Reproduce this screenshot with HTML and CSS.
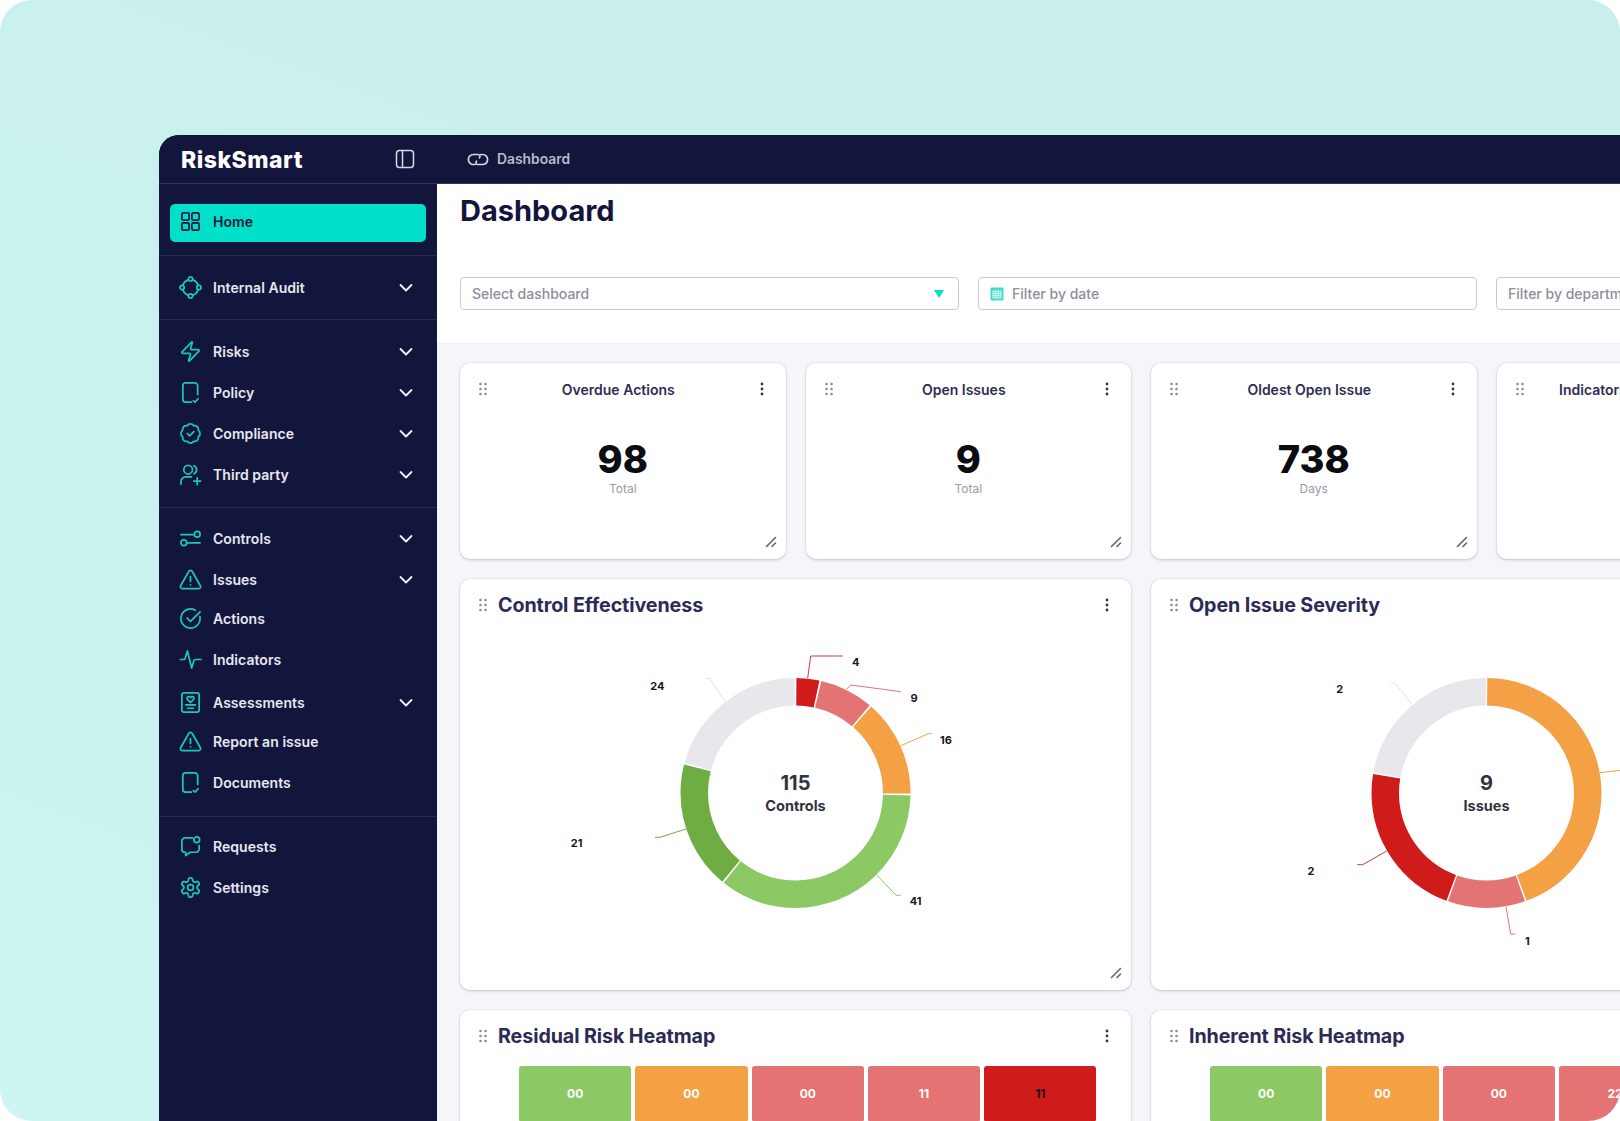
FILE: index.html
```html
<!DOCTYPE html>
<html lang="en">
<head>
<meta charset="utf-8">
<title>RiskSmart Dashboard</title>
<link rel="stylesheet" href="styles.css">
</head>
<body>
<svg class="sprite" width="0" height="0" aria-hidden="true">
  <symbol id="i-doc" viewBox="0 0 24 24"><path d="M19.500 14V5a3 3 0 0 0-3-3H7a3 3 0 0 0-3 3v14a3 3 0 0 0 3 3h6"/><path d="M15 20.500l1.800 1.500 3.200-3.500"/></symbol>
  <symbol id="i-tri" viewBox="0 0 24 24"><path d="M22.300 18.500 13.800 3.600a2 2 0 0 0-3.600 0L1.700 18.500A2 2 0 0 0 3.500 21.500h17a2 2 0 0 0 1.800-3z"/><path d="M12 9v5"/><path d="M12 17.500h.01"/></symbol>
  <symbol id="i-chev" viewBox="0 0 16 16"><path d="M2.500 5 8 10.500 13.500 5"/></symbol>
  <symbol id="i-grip" viewBox="0 0 8 14"><circle cx="1.500" cy="2" r="1.300"/><circle cx="6.500" cy="2" r="1.300"/><circle cx="1.500" cy="7" r="1.300"/><circle cx="6.500" cy="7" r="1.300"/><circle cx="1.500" cy="12" r="1.300"/><circle cx="6.500" cy="12" r="1.300"/></symbol>
  <symbol id="i-dots" viewBox="0 0 4 14"><circle cx="2" cy="2" r="1.400"/><circle cx="2" cy="7" r="1.400"/><circle cx="2" cy="12" r="1.400"/></symbol>
  <symbol id="i-resize" viewBox="0 0 12 12"><path d="M1.500 10.500 10.500 1.500"/><path d="M7 10.500 10.500 7"/></symbol>
</svg>

<div class="frame">
  <div class="app">
    <header class="topbar">
      <div class="brand">
        <span class="logo">RiskSmart</span>
        <svg class="panel-icon" viewBox="0 0 20 20"><rect x="1.500" y="1.500" width="17" height="17" rx="3"/><path d="M7.500 1.500v17"/></svg>
      </div>
      <div class="crumb">
        <svg class="crumb-icon" viewBox="0 0 24 16"><path d="M9 13.500H7a5.500 5.500 0 0 1 0-11h5c2.200 0 2.800 2 1.600 3.700"/><path d="M15 2.500h2a5.500 5.500 0 0 1 0 11h-5c-2.200 0-2.800-2-1.600-3.700"/></svg>
        <span>Dashboard</span>
      </div>
    </header>

    <div class="body">
      <nav class="sidebar">
        <div class="nav-section nav-section--home">
          <a class="nav-item nav-item--active">
            <svg class="nav-icon" viewBox="0 0 24 24"><rect x="3" y="3" width="7.500" height="7.500" rx="1.500"/><rect x="13.500" y="3" width="7.500" height="7.500" rx="1.500"/><rect x="3" y="13.500" width="7.500" height="7.500" rx="1.500"/><rect x="13.500" y="13.500" width="7.500" height="7.500" rx="1.500"/></svg>
            <span class="nav-label">Home</span>
          </a>
        </div>
        <div class="nav-section">
          <a class="nav-item">
            <svg class="nav-icon" viewBox="0 0 24 24"><path d="M14.600 4.100a8.800 8.800 0 0 1 5.300 5.300M19.900 14.600a8.800 8.800 0 0 1-5.300 5.300M9.400 19.900a8.800 8.800 0 0 1-5.300-5.300M4.100 9.400a8.800 8.800 0 0 1 5.300-5.300"/><circle cx="12" cy="3.200" r="2.200"/><circle cx="20.800" cy="12" r="2.200"/><circle cx="12" cy="20.800" r="2.200"/><circle cx="3.200" cy="12" r="2.200"/></svg>
            <span class="nav-label">Internal Audit</span>
            <svg class="chev"><use href="#i-chev"/></svg>
          </a>
        </div>
        <div class="nav-section nav-section--risk">
          <a class="nav-item">
            <svg class="nav-icon" viewBox="0 0 24 24"><path d="M4 14a1 1 0 0 1-.78-1.630l9.900-10.200a.5.5 0 0 1 .86.460l-1.920 6.020A1 1 0 0 0 13 10h7a1 1 0 0 1 .78 1.630l-9.900 10.200a.5.5 0 0 1-.86-.460l1.920-6.020A1 1 0 0 0 11 14z"/></svg>
            <span class="nav-label">Risks</span>
            <svg class="chev"><use href="#i-chev"/></svg>
          </a>
          <a class="nav-item">
            <svg class="nav-icon"><use href="#i-doc"/></svg>
            <span class="nav-label">Policy</span>
            <svg class="chev"><use href="#i-chev"/></svg>
          </a>
          <a class="nav-item">
            <svg class="nav-icon" viewBox="0 0 24 24"><path d="M3.850 8.620a4 4 0 0 1 4.780-4.770 4 4 0 0 1 6.740 0 4 4 0 0 1 4.780 4.780 4 4 0 0 1 0 6.740 4 4 0 0 1-4.770 4.780 4 4 0 0 1-6.750 0 4 4 0 0 1-4.780-4.770 4 4 0 0 1 0-6.760z"/><path d="m8.500 12 2.500 2.500 4.500-4.500"/></svg>
            <span class="nav-label">Compliance</span>
            <svg class="chev"><use href="#i-chev"/></svg>
          </a>
          <a class="nav-item">
            <svg class="nav-icon" viewBox="0 0 24 24"><circle cx="9.500" cy="7" r="4.500"/><path d="M15.500 2.800a4.500 4.500 0 0 1 0 8.400"/><path d="M2 22v-2.500A5 5 0 0 1 7 14.500h6"/><path d="M19 15.500v7M15.500 19h7"/></svg>
            <span class="nav-label">Third party</span>
            <svg class="chev"><use href="#i-chev"/></svg>
          </a>
        </div>
        <div class="nav-section nav-section--core">
          <a class="nav-item">
            <svg class="nav-icon" viewBox="0 0 24 24"><path d="M2 8h14"/><circle cx="19" cy="7.500" r="3"/><path d="M8 16.500h14"/><circle cx="5" cy="16.500" r="3"/></svg>
            <span class="nav-label">Controls</span>
            <svg class="chev"><use href="#i-chev"/></svg>
          </a>
          <a class="nav-item">
            <svg class="nav-icon"><use href="#i-tri"/></svg>
            <span class="nav-label">Issues</span>
            <svg class="chev"><use href="#i-chev"/></svg>
          </a>
          <a class="nav-item nav-item--up">
            <svg class="nav-icon" viewBox="0 0 24 24"><path d="M21.800 10A10 10 0 1 1 17 3.340"/><path d="m8.500 11.500 3.500 3.500L22 5"/></svg>
            <span class="nav-label">Actions</span>
          </a>
          <a class="nav-item">
            <svg class="nav-icon" viewBox="0 0 24 24"><path d="M1.500 12h3.500a1.500 1.500 0 0 0 1.400-1L8.800 3l4.400 18 2.300-7.800a1.500 1.500 0 0 1 1.400-1.200h6"/></svg>
            <span class="nav-label">Indicators</span>
          </a>
          <a class="nav-item nav-item--down">
            <svg class="nav-icon" viewBox="0 0 24 24"><rect x="3" y="2" width="18" height="20" rx="2"/><path d="M12 12 8.800 8.800a1.900 1.900 0 0 1 0-2.400c.8-.7 2.200-.7 3.200.4 1-1.100 2.400-1.100 3.200-.4a1.900 1.900 0 0 1 0 2.400z"/><path d="M7 14.500h10M9 18h6"/></svg>
            <span class="nav-label">Assessments</span>
            <svg class="chev"><use href="#i-chev"/></svg>
          </a>
          <a class="nav-item nav-item--up">
            <svg class="nav-icon"><use href="#i-tri"/></svg>
            <span class="nav-label">Report an issue</span>
          </a>
          <a class="nav-item">
            <svg class="nav-icon"><use href="#i-doc"/></svg>
            <span class="nav-label">Documents</span>
          </a>
        </div>
        <div class="nav-section nav-section--last">
          <a class="nav-item">
            <svg class="nav-icon" viewBox="0 0 24 24"><path d="M14 3H6.500A3.500 3.500 0 0 0 3 6.500v8.500a3 3 0 0 0 3 3h1v3.500l4.500-3.500h6a3.500 3.500 0 0 0 3.500-3.500V11"/><circle cx="18.500" cy="5" r="3"/></svg>
            <span class="nav-label">Requests</span>
          </a>
          <a class="nav-item">
            <svg class="nav-icon" viewBox="0 0 24 24"><path d="M12.220 2h-.44a2 2 0 0 0-2 2v.18a2 2 0 0 1-1 1.730l-.43.25a2 2 0 0 1-2 0l-.15-.08a2 2 0 0 0-2.730.73l-.22.380a2 2 0 0 0 .73 2.730l.15.100a2 2 0 0 1 1 1.720v.51a2 2 0 0 1-1 1.740l-.15.090a2 2 0 0 0-.73 2.730l.22.380a2 2 0 0 0 2.730.730l.15-.080a2 2 0 0 1 2 0l.43.250a2 2 0 0 1 1 1.730V20a2 2 0 0 0 2 2h.44a2 2 0 0 0 2-2v-.18a2 2 0 0 1 1-1.730l.43-.25a2 2 0 0 1 2 0l.15.080a2 2 0 0 0 2.730-.730l.22-.390a2 2 0 0 0-.73-2.730l-.15-.080a2 2 0 0 1-1-1.740v-.5a2 2 0 0 1 1-1.740l.15-.090a2 2 0 0 0 .73-2.730l-.22-.380a2 2 0 0 0-2.730-.730l-.15.080a2 2 0 0 1-2 0l-.43-.250a2 2 0 0 1-1-1.730V4a2 2 0 0 0-2-2z"/><circle cx="12" cy="12" r="3"/></svg>
            <span class="nav-label">Settings</span>
          </a>
        </div>
      </nav>

      <main class="main">
        <section class="page-head">
          <h1 class="page-title">Dashboard</h1>
          <div class="filters">
            <div class="filter">
              <span class="filter-text">Select dashboard</span>
              <span class="caret"></span>
            </div>
            <div class="filter">
              <svg class="cal-icon" viewBox="0 0 14 14"><rect class="cal-bg" width="13" height="13" x=".5" y=".5" rx="1"/><path class="cal-grid" d="M3 4h8v7H3zM3 6.300h8M3 8.700h8M5.700 4v7M8.300 4v7"/></svg>
              <span class="filter-text">Filter by date</span>
            </div>
            <div class="filter">
              <span class="filter-text">Filter by department</span>
            </div>
          </div>
        </section>

        <section class="grid">
          <article class="card">
            <div class="stat-head">
              <svg class="grip"><use href="#i-grip"/></svg>
              <h3 class="stat-title">Overdue Actions</h3>
              <svg class="dots"><use href="#i-dots"/></svg>
            </div>
            <div class="stat-value">98</div>
            <div class="stat-unit">Total</div>
            <svg class="resize"><use href="#i-resize"/></svg>
          </article>
          <article class="card">
            <div class="stat-head">
              <svg class="grip"><use href="#i-grip"/></svg>
              <h3 class="stat-title">Open Issues</h3>
              <svg class="dots"><use href="#i-dots"/></svg>
            </div>
            <div class="stat-value">9</div>
            <div class="stat-unit">Total</div>
            <svg class="resize"><use href="#i-resize"/></svg>
          </article>
          <article class="card">
            <div class="stat-head">
              <svg class="grip"><use href="#i-grip"/></svg>
              <h3 class="stat-title">Oldest Open Issue</h3>
              <svg class="dots"><use href="#i-dots"/></svg>
            </div>
            <div class="stat-value">738</div>
            <div class="stat-unit">Days</div>
            <svg class="resize"><use href="#i-resize"/></svg>
          </article>
          <article class="card">
            <div class="stat-head">
              <svg class="grip"><use href="#i-grip"/></svg>
              <h3 class="stat-title">Indicators Out of Tolerances</h3>
              <svg class="dots"><use href="#i-dots"/></svg>
            </div>
          </article>

          <article class="card card--wide">
            <div class="chart-head">
              <svg class="grip"><use href="#i-grip"/></svg>
              <h2 class="chart-title">Control Effectiveness</h2>
              <svg class="dots"><use href="#i-dots"/></svg>
            </div>
            <svg class="donut" viewBox="0 0 671 350">
              <g class="rings" transform="rotate(-90 335.500 163)">
                <circle class="seg seg-red" cx="335.500" cy="163" r="101.250" pathLength="115" stroke-dasharray="3.700 111.300" stroke-dashoffset="-0.150"/>
                <circle class="seg seg-salmon" cx="335.500" cy="163" r="101.250" pathLength="115" stroke-dasharray="8.700 106.300" stroke-dashoffset="-4.150"/>
                <circle class="seg seg-orange" cx="335.500" cy="163" r="101.250" pathLength="115" stroke-dasharray="15.700 99.300" stroke-dashoffset="-13.150"/>
                <circle class="seg seg-green" cx="335.500" cy="163" r="101.250" pathLength="115" stroke-dasharray="40.700 74.300" stroke-dashoffset="-29.150"/>
                <circle class="seg seg-dgreen" cx="335.500" cy="163" r="101.250" pathLength="115" stroke-dasharray="20.700 94.300" stroke-dashoffset="-70.150"/>
                <circle class="seg seg-grey" cx="335.500" cy="163" r="101.250" pathLength="115" stroke-dasharray="23.700 91.300" stroke-dashoffset="-91.150"/>
              </g>
              <polyline class="lead lead-red" points="347.700,48 350.700,26 382.700,26"/>
              <polyline class="lead lead-salmon" points="386.700,59 390.700,55 441,61.700"/>
              <polyline class="lead lead-orange" points="441,115.700 468.300,103.700 471.700,103.700"/>
              <polyline class="lead lead-green" points="416.700,245 436,265.300 440.700,265.300"/>
              <polyline class="lead lead-dgreen" points="226,199 200,207.300 195,207.300"/>
              <polyline class="lead lead-grey" points="265,71.700 250,48.300 245.700,48.300"/>
              <text class="pie-label" x="395.700" y="36">4</text>
              <text class="pie-label" x="454" y="71.700">9</text>
              <text class="pie-label" x="486" y="114.300">16</text>
              <text class="pie-label" x="455.700" y="275">41</text>
              <text class="pie-label" x="116.700" y="217.300">21</text>
              <text class="pie-label" x="197.300" y="60">24</text>
              <text class="pie-total" x="335.500" y="159.500">115</text>
              <text class="pie-name" x="335.500" y="181">Controls</text>
            </svg>
            <svg class="resize"><use href="#i-resize"/></svg>
          </article>

          <article class="card card--wide">
            <div class="chart-head">
              <svg class="grip"><use href="#i-grip"/></svg>
              <h2 class="chart-title">Open Issue Severity</h2>
              <svg class="dots"><use href="#i-dots"/></svg>
            </div>
            <svg class="donut" viewBox="0 0 671 350">
              <g class="rings" transform="rotate(-90 335.500 163)">
                <circle class="seg seg-orange" cx="335.500" cy="163" r="101.250" pathLength="9" stroke-dasharray="3.980 5.020" stroke-dashoffset="-0.010"/>
                <circle class="seg seg-salmon" cx="335.500" cy="163" r="101.250" pathLength="9" stroke-dasharray="0.980 8.020" stroke-dashoffset="-4.010"/>
                <circle class="seg seg-red" cx="335.500" cy="163" r="101.250" pathLength="9" stroke-dasharray="1.980 7.020" stroke-dashoffset="-5.010"/>
                <circle class="seg seg-grey" cx="335.500" cy="163" r="101.250" pathLength="9" stroke-dasharray="1.980 7.020" stroke-dashoffset="-7.010"/>
              </g>
              <polyline class="lead lead-orange" points="449,142.700 480,139"/>
              <polyline class="lead lead-salmon" points="355,276.700 359.700,304 364.300,304"/>
              <polyline class="lead lead-red" points="235.700,221 211.700,234.700 206.300,234.700"/>
              <polyline class="lead lead-grey" points="261,74 244,53.300 239.700,53.300"/>
              <text class="pie-label" x="376.300" y="315">1</text>
              <text class="pie-label" x="160" y="245">2</text>
              <text class="pie-label" x="188.700" y="63.300">2</text>
              <text class="pie-total" x="335.500" y="159.500">9</text>
              <text class="pie-name" x="335.500" y="181">Issues</text>
            </svg>
          </article>

          <article class="card card--wide">
            <div class="chart-head">
              <svg class="grip"><use href="#i-grip"/></svg>
              <h2 class="chart-title">Residual Risk Heatmap</h2>
              <svg class="dots"><use href="#i-dots"/></svg>
            </div>
            <div class="heat">
              <div class="cell cell-green">00</div>
              <div class="cell cell-orange">00</div>
              <div class="cell cell-salmon">00</div>
              <div class="cell cell-salmon">11</div>
              <div class="cell cell-red">11</div>
            </div>
          </article>

          <article class="card card--wide">
            <div class="chart-head">
              <svg class="grip"><use href="#i-grip"/></svg>
              <h2 class="chart-title">Inherent Risk Heatmap</h2>
              <svg class="dots"><use href="#i-dots"/></svg>
            </div>
            <div class="heat">
              <div class="cell cell-green">00</div>
              <div class="cell cell-orange">00</div>
              <div class="cell cell-salmon">00</div>
              <div class="cell cell-salmon">22</div>
              <div class="cell cell-red">22</div>
            </div>
          </article>
        </section>
      </main>
    </div>
  </div>
</div>
</body>
</html>
```

FILE: styles.css
```css
* { box-sizing: border-box; }
html, body { margin: 0; padding: 0; background: #fff; }
body { font-family: "Inter", "Liberation Sans", sans-serif; width: 1620px; height: 1121px; overflow: hidden; }
h1, h2, h3 { margin: 0; }
.sprite { position: absolute; }

.frame {
  width: 1620px; height: 1121px; overflow: hidden; border-radius: 32px;
  padding: 135px 0 0 159px;
  background: linear-gradient(20deg, #cdf6f2 0%, #c9f1ee 40%, #c8efec 100%);
}
.app { height: 986px; width: 1461px; display: flex; flex-direction: column; overflow: hidden; border-top-left-radius: 20px; background: #13163c; }

.topbar { height: 49px; flex: none; display: flex; align-items: center; background: #13163c; border-bottom: 1px solid #32355a; }
.brand { width: 278px; flex: none; display: flex; align-items: center; justify-content: space-between; padding: 0 22px 0 22px; }
.logo { color: #fff; font-size: 23px; font-weight: 800; letter-spacing: 0.5px; line-height: 1; padding-top: 2px; }
.panel-icon { width: 20px; height: 20px; fill: none; stroke: #d7d8e4; stroke-width: 1.500; }
.crumb { display: flex; align-items: center; gap: 8px; margin-left: 30px; color: #b9bacb; font-size: 13.800px; font-weight: 600; letter-spacing: 0.05px; }
.crumb-icon { width: 22px; height: 15px; fill: none; stroke: #d7d8e4; stroke-width: 1.800; stroke-linecap: round; }

.body { flex: 1; display: flex; min-height: 0; }
.sidebar { width: 278px; flex: none; background: #13163c; color: #e7e7f0; }
.nav-section { padding: 11px 0; border-bottom: 1px solid #272a50; }
.nav-section--home { padding: 20px 11px 13px; }
.nav-section--risk { padding: 11px 0 12px; }
.nav-section--core { padding: 10px 0 13px; }
.nav-section--last { padding-top: 9px; border-bottom: 0; }
.nav-item { height: 41px; display: flex; align-items: center; padding-left: 20px; padding-right: 23px; font-size: 14px; font-weight: 600; letter-spacing: 0.05px; }
.nav-item--up { margin-top: -2px; }
.nav-item--down { margin-top: 2px; }
.nav-item--active { height: 38px; padding-left: 9px; padding-right: 12px; padding-bottom: 3px; background: #00dfc9; border-radius: 5px; color: #13163c; }
.nav-label { flex: 1; margin-left: 11px; }
.nav-icon { width: 23px; height: 23px; flex: none; fill: none; stroke: #1cc7b8; stroke-width: 1.800; stroke-linecap: round; stroke-linejoin: round; }
.nav-item--active .nav-icon { stroke: #13163c; }
.chev { width: 16px; height: 16px; flex: none; fill: none; stroke: #f2f2f7; stroke-width: 1.800; stroke-linecap: round; stroke-linejoin: round; }

.main { flex: 1; min-width: 0; overflow: hidden; background: #f5f5fa; }
.page-head { height: 160px; padding: 10px 0 0 23px; background: #fff; border-bottom: 1px solid #eeeef3; }
.page-title { color: #13163c; font-size: 29px; font-weight: 700; line-height: 34px; }
.filters { display: flex; gap: 19px; margin-top: 49px; width: 1600px; }
.filter { width: 499px; height: 33px; flex: none; display: flex; align-items: center; justify-content: space-between; padding: 0 12px 0 11px; background: #fff; border: 1px solid #c9c9d3; border-radius: 4px; }
.filter-text { flex: 1; color: #8e8e9b; font-size: 14px; font-weight: 500; white-space: nowrap; line-height: 30px; }
.caret { width: 0; height: 0; margin-right: 2px; border-left: 5.500px solid transparent; border-right: 5.500px solid transparent; border-top: 8px solid #00dfc9; }
.cal-icon { width: 14px; height: 14px; flex: none; margin-right: 8px; }
.cal-bg { fill: #3fdccd; }
.cal-grid { fill: none; stroke: #fff; stroke-width: .8; }

.grid { display: grid; grid-template-columns: repeat(4, 325.500px); grid-template-rows: 196px 411px 200px; gap: 20px; padding: 19px 0 0 23px; width: 1800px; }
.card { position: relative; background: #fff; border-radius: 10px; box-shadow: 0 1px 3px rgba(40, 40, 80, .22), 0 0 0 1px rgba(40, 40, 80, .03); overflow: hidden; }
.card--wide { grid-column: span 2; }

.stat-head { display: flex; align-items: center; height: 26px; margin-top: 13px; padding: 0 22px 0 19px; }
.stat-title { flex: 1; padding-right: 10px; text-align: center; color: #2e2e54; font-size: 14px; font-weight: 600; white-space: nowrap; }
.grip { width: 8px; height: 14px; flex: none; fill: #8a8a99; }
.dots { width: 4px; height: 14px; flex: none; fill: #33334f; }
.stat-value { margin-top: 35px; text-align: center; color: #0b0b12; font-size: 38px; font-weight: 800; line-height: 45px; }
.stat-unit { text-align: center; color: #9a9aa6; font-size: 12px; line-height: 14px; }
.resize { position: absolute; right: 9px; bottom: 11px; width: 12px; height: 12px; fill: none; stroke: #62627e; stroke-width: 1.600; stroke-linecap: round; }

.chart-head { display: flex; align-items: center; gap: 11px; height: 51px; padding: 0 22px 0 19px; }
.chart-title { flex: 1; color: #2b2b55; font-size: 19.700px; font-weight: 700; letter-spacing: -0.1px; }
.donut { display: block; width: 671px; height: 350px; }
.seg { fill: none; stroke-width: 27.500; }
.seg-red { stroke: #cf1b1a; }
.seg-salmon { stroke: #e47373; }
.seg-orange { stroke: #f3a144; }
.seg-green { stroke: #8cc964; }
.seg-dgreen { stroke: #6fac42; }
.seg-grey { stroke: #e7e7ec; }
.lead { fill: none; stroke-width: 1; }
.lead-red { stroke: #d13a3a; }
.lead-salmon { stroke: #e47373; }
.lead-orange { stroke: #f3a144; }
.lead-green { stroke: #8cc964; }
.lead-dgreen { stroke: #6fac42; }
.lead-grey { stroke: #e2e2e8; }
.pie-label { fill: #17171f; font-size: 11px; font-weight: 700; text-anchor: middle; }
.pie-total { fill: #33333f; font-size: 20px; font-weight: 700; text-anchor: middle; }
.pie-name { fill: #33333f; font-size: 14.500px; font-weight: 700; text-anchor: middle; }

.heat { display: grid; grid-template-columns: repeat(5, 112.300px); gap: 4px; padding: 5px 0 0 59px; }
.cell { height: 56px; padding-bottom: 2px; display: flex; align-items: center; justify-content: center; border-radius: 3px; color: #fff; font-size: 12px; font-weight: 700; }
.cell-green { background: #8cc964; }
.cell-orange { background: #f3a144; }
.cell-salmon { background: #e47373; }
.cell-red { background: #cf1b1a; color: #14141c; }
```
